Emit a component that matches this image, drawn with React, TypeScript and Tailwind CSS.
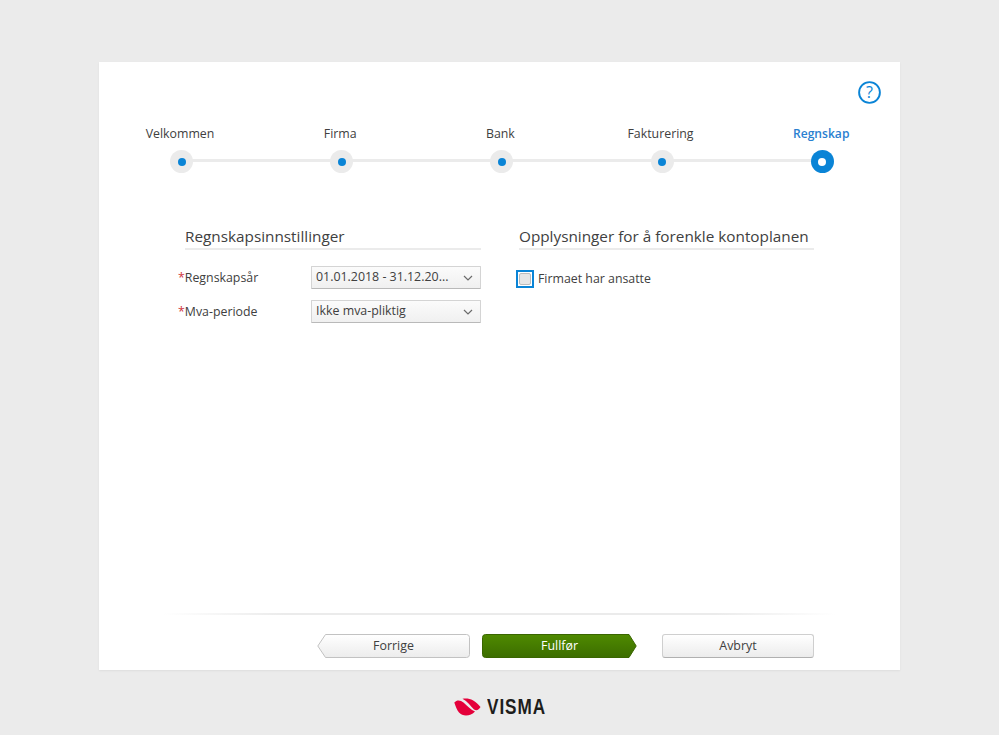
import React from "react";

const steps = ["Velkommen", "Firma", "Bank", "Fakturering", "Regnskap"];

function Chevron() {
  return (
    <svg width="10" height="6" viewBox="0 0 10 6" className="shrink-0" fill="none" stroke="#6b6b6b" strokeWidth="1.2">
      <path d="M1 1l4 4 4-4" />
    </svg>
  );
}

function Select({ value }: { value: string }) {
  return (
    <div className="flex h-[23px] w-[170px] items-center justify-between rounded-[1px] border border-[#d4d4d4] border-b-[#b9b9b9] bg-gradient-to-b from-[#fbfbfb] to-[#f0f0f0] pl-[4px] pr-[7px] text-[12.4px] text-[#404040]">
      <span>{value}</span>
      <Chevron />
    </div>
  );
}

function Field({ label, value }: { label: string; value: string }) {
  return (
    <div className="flex h-[23px] items-center justify-between">
      <span className="pt-[2px] text-[12.35px] text-[#404040]">
        <span className="text-[#d0353c]">*</span>
        {label}
      </span>
      <Select value={value} />
    </div>
  );
}

function ButtonShape({ id, d, from, to, stroke, w }: { id: string; d: string; from: string; to: string; stroke: string; w: number }) {
  return (
    <svg width={w} height={24} viewBox={`0 0 ${w} 24`} className="absolute left-0 top-0">
      <defs>
        <linearGradient id={id} x1="0" y1="0" x2="0" y2="1">
          <stop offset="0" stopColor={from} />
          <stop offset="1" stopColor={to} />
        </linearGradient>
      </defs>
      <path d={d} fill={`url(#${id})`} stroke={stroke} strokeWidth="1" />
    </svg>
  );
}

export default function App() {
  return (
    <div className="min-h-[735px] bg-[#ebebeb] pt-[62px] font-['Open_Sans',sans-serif]">
      <div className="ml-[99px] flex h-[608px] w-[801px] flex-col bg-white shadow-[0_1px_2px_rgba(0,0,0,0.06)]">
        <div className="flex h-[46px] justify-end pr-[19px] pt-[19px]">
          <svg width="23" height="23" viewBox="0 0 23 23" fill="none">
            <circle cx="11.5" cy="11.5" r="10.4" stroke="#0a84d6" strokeWidth="1.9" />
            <text x="11.5" y="17" textAnchor="middle" fontSize="16" fill="#0a84d6" fontFamily="Open Sans, sans-serif">?</text>
          </svg>
        </div>

        <div className="relative ml-[71px] mr-[66.3px] mt-[16px] flex h-[49px] justify-between">
          <div className="absolute left-[11px] right-[11px] top-[35px] h-[3px] bg-[#ebebeb]" />
          {steps.map((s, i) => {
            const active = i === steps.length - 1;
            return (
              <div key={s} className="relative flex w-[23px] flex-col items-center">
                <div
                  className={
                    "h-[18px] translate-y-[1px] whitespace-nowrap leading-[18px] " +
                    (active ? "text-[12.1px] font-semibold text-[#2a7fd0] -translate-x-[1px]" : "text-[12.35px] text-[#404040] -translate-x-[1.5px]")
                  }
                >
                  {s}
                </div>
                <div
                  className={
                    "mt-[8px] flex h-[23px] w-[23px] items-center justify-center rounded-full " +
                    (active ? "bg-[#0a84d6]" : "bg-[#ebebeb]")
                  }
                >
                  <div className={"h-[8px] w-[8px] rounded-full " + (active ? "bg-white" : "bg-[#0a84d6]")} />
                </div>
              </div>
            );
          })}
        </div>

        <div className="mt-[50px] flex flex-1 pl-[79px]">
          <div className="w-[303px]">
            <div className="ml-[7px] h-[27px] border-b-2 border-[#ebebeb] text-[15.3px] leading-[26px] text-[#404040]">
              Regnskapsinnstillinger
            </div>
            <div className="mt-[16px] flex flex-col gap-[11px]">
              <Field label="Regnskapsår" value="01.01.2018 - 31.12.20..." />
              <Field label="Mva-periode" value="Ikke mva-pliktig" />
            </div>
          </div>
          <div className="ml-[38px] w-[295px]">
            <div className="h-[27px] border-b-2 border-[#ebebeb] text-[15.3px] leading-[26px] text-[#404040]">
              Opplysninger for å forenkle kontoplanen
            </div>
            <label className="-ml-[3px] mt-[20px] flex h-[18px] items-center gap-[4px]">
              <span className="flex h-[18px] w-[18px] items-center justify-center border-2 border-[#0a84d6] bg-white">
                <span className="h-[12px] w-[12px] rounded-[2px] border border-[#bcbcbc] bg-[#e6e6e6]" />
              </span>
              <span className="text-[12.35px] text-[#404040]">Firmaet har ansatte</span>
            </label>
          </div>
        </div>

        <div className="mx-[64px] h-[2px] bg-[linear-gradient(to_right,transparent,#ebebeb_18%,#ebebeb_82%,transparent)]" />

        <div className="flex h-[55px] items-start pt-[19px] pl-[218px]">
          <button className="relative h-[24px] w-[153px] text-[12.4px] text-[#404040]">
            <ButtonShape id="g1" w={153} d="M8.5 .5H149.5a3 3 0 0 1 3 3V20.5a3 3 0 0 1-3 3H8.5L.8 12Z" from="#ffffff" to="#ececec" stroke="#c2c2c2" />
            <span className="relative">Forrige</span>
          </button>
          <button className="relative ml-[12px] h-[24px] w-[155px] text-[12.4px] font-medium text-white">
            <ButtonShape id="g2" w={155} d="M3.5 .5H147L154.2 12 147 23.5H3.5a3 3 0 0 1-3-3V3.5a3 3 0 0 1 3-3Z" from="#4f8a00" to="#3c6d00" stroke="#3a6600" />
            <span className="relative">Fullfør</span>
          </button>
          <button className="relative ml-[25px] h-[24px] w-[152px] rounded-[3px] border border-[#cfcfcf] border-b-[#b0b0b0] bg-gradient-to-b from-[#ffffff] to-[#ececec] pt-[1px] text-[12.4px] text-[#404040]">
            Avbryt
          </button>
        </div>
      </div>

      <div className="flex h-[65px] items-start pl-[454px] pt-[27px]">
        <svg width="27" height="19" viewBox="0 0 27 19" className="mt-[1px]">
          <path d="M0.3 4.5C3 1.5 6.5 2 9.5 4.5 13.5 8 17 12 21 13.5 17 18 9 19 5 14.5 3 12 1.5 8 0.3 4.5Z" fill="#e4003a" />
          <path d="M8.5 .8C14 -.5 21 1.5 26.5 9C25 12 22.5 13 20 11.5 16.5 8 13.5 3.5 8.5 .8Z" fill="#e4003a" />
        </svg>
        <span className="ml-[6px] block w-[60px] origin-left scale-x-[0.78] whitespace-nowrap font-['Liberation_Sans',sans-serif] text-[22px] font-bold leading-[20px] tracking-[1.2px] text-[#1d1d1b]">VISMA</span>
      </div>
    </div>
  );
}
